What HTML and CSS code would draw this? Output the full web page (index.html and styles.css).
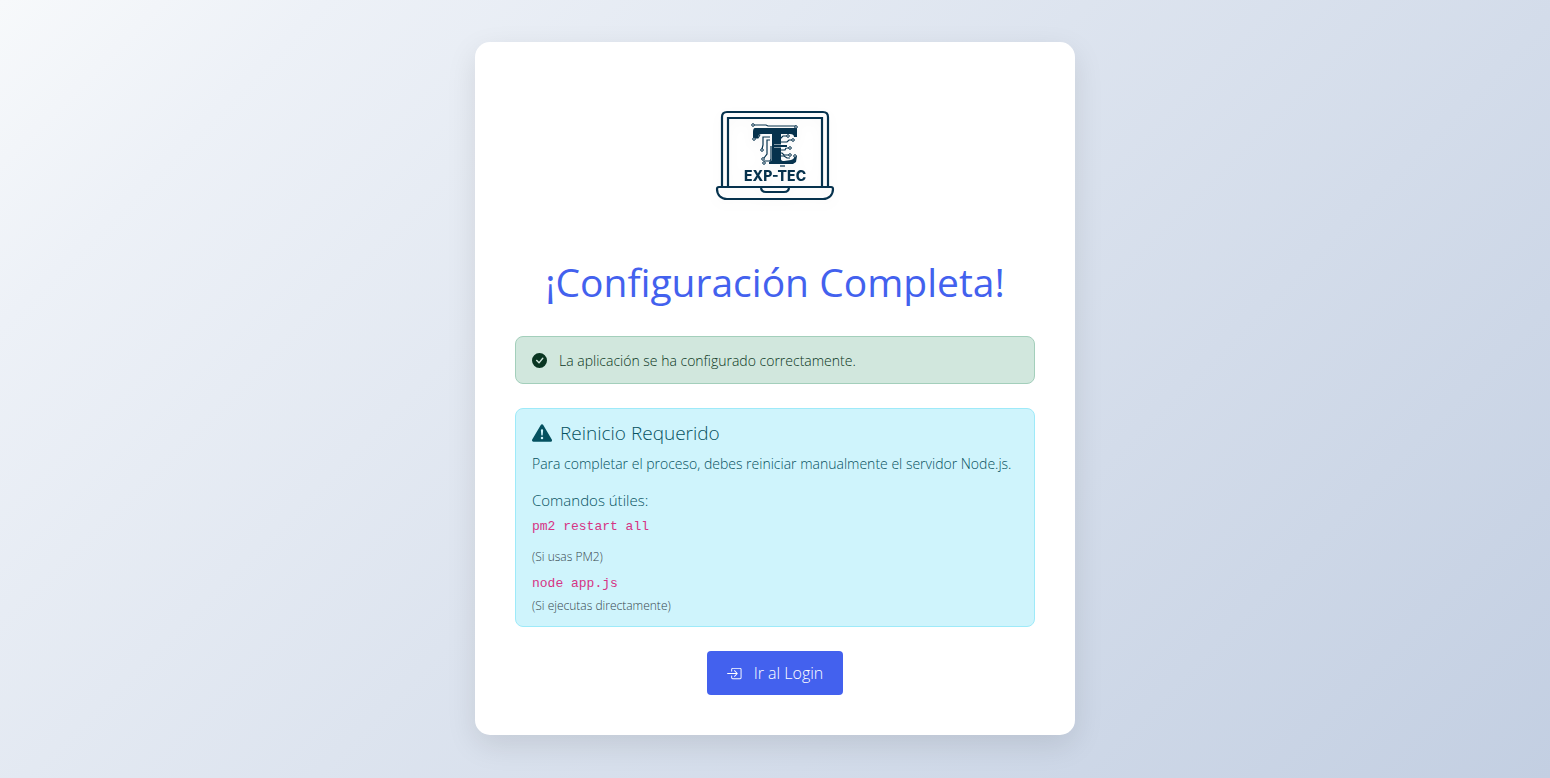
FILE: index.html
```html
<!DOCTYPE html>
<html lang="es">
<head>
<meta charset="utf-8">
<meta name="viewport" content="width=device-width, initial-scale=1">
<title>Configuración Completa</title>
<link rel="stylesheet" href="styles.css">
</head>
<body>
<main class="card">
  <svg class="logo" viewBox="0 0 120 92" role="img" aria-label="EXP-TEC">
    <g fill="none" stroke="#06324d" stroke-width="2.200">
      <path d="M7 76V7q0-5 5-5h96q5 0 5 5v69" />
      <path d="M13 76V8h94v68" />
      <path d="M4 77h112q2 0 2 2c0 6-4 10-10 10H12C6 89 2 85 2 79q0-2 2-2z" />
      <path d="M46 77q0 5 5 5h18q5 0 5-5" />
    </g>
    <path fill="#06324d" d="M40 18h42v9h-3q0-3-4-3H66v25q0 2 3 2l7-1q3-1 4-4h2l-1 6-3 2H54v-2q3-1 3-3V24H47q-4 0-4 4h-5v-6q0-4 2-4z" />
    <g fill="none" stroke="#06324d" stroke-width="1.200">
      <path d="M39 15h12l2 1h28M45 25l-2 3h-3M55 27h-7v8l-1 4M55 30h-3v14l-3 4M56 36v13l-1 2h-6" />
      <path d="M65 29l3-3h5M65 32h7l2-2h4M65 40h5l1-2h4M65 43h2l2 2h5M65 46h4l3 2h3" />
      <path d="M59 36h13" stroke="#fff" stroke-width="3" />
      <path d="M59 36h13" stroke-width="2" />
      <path d="M65 56h5" stroke-width="1.200" />
    </g>
    <g fill="#fff" stroke="#06324d">
      <circle cx="38" cy="15" r="1.300" /><circle cx="81" cy="17" r="1.300" />
      <circle cx="39" cy="29" r="1.300" /><circle cx="47" cy="40" r="1.300" />
      <circle cx="48" cy="49" r="1.300" /><circle cx="49" cy="53" r="1.300" />
      <circle cx="73" cy="26" r="1.300" /><circle cx="78" cy="30" r="1.300" />
      <circle cx="75" cy="38" r="1.300" /><circle cx="75" cy="45" r="1.300" />
      <circle cx="80" cy="46" r="1.300" />
    </g>
    <text class="logo-text" x="60" y="71" text-anchor="middle">EXP-TEC</text>
  </svg>
  <h1 class="title">¡Configuración Completa!</h1>
  <div class="alert alert-success" role="alert">
    <svg class="icon-check" viewBox="0 0 16 16" fill="currentColor" aria-hidden="true"><path d="M16 8A8 8 0 1 1 0 8a8 8 0 0 1 16 0m-3.97-3.03a.75.75 0 0 0-1.08.022L7.477 9.417 5.384 7.323a.75.75 0 0 0-1.06 1.06L6.97 11.03a.75.75 0 0 0 1.079-.02l3.992-4.99a.75.75 0 0 0-.01-1.05z"/></svg>
    <span>La aplicación se ha configurado correctamente.</span>
  </div>
  <section class="alert alert-info">
    <h2 class="alert-heading">
      <svg class="icon-warning" viewBox="0 0 16 16" fill="currentColor" aria-hidden="true"><path d="M8.982 1.566a1.13 1.13 0 0 0-1.96 0L.165 13.233c-.457.778.091 1.767.98 1.767h13.713c.889 0 1.438-.99.98-1.767zM8 5c.535 0 .954.462.9.995l-.35 3.507a.552.552 0 0 1-1.1 0L7.1 5.995A.905.905 0 0 1 8 5m.002 6a1 1 0 1 1 0 2 1 1 0 0 1 0-2"/></svg>
      <span>Reinicio Requerido</span>
    </h2>
    <p class="lead">Para completar el proceso, debes reiniciar manualmente el servidor Node.js.</p>
    <h3 class="commands-title">Comandos útiles:</h3>
    <code class="command">pm2 restart all</code>
    <p class="note note-first">(Si usas PM2)</p>
    <code class="command">node app.js</code>
    <p class="note">(Si ejecutas directamente)</p>
  </section>
  <a class="button" href="#login">
    <svg class="icon-login" viewBox="0 0 16 16" fill="currentColor" aria-hidden="true"><path fill-rule="evenodd" d="M4.5 3.5A1.5 1.5 0 0 1 6 2h8a1.5 1.5 0 0 1 1.500 1.500v9A1.500 1.500 0 0 1 14 14H6a1.500 1.500 0 0 1-1.500-1.500v-2a.5.5 0 0 1 1 0v2a.5.5 0 0 0 .5.5h8a.5.5 0 0 0 .5-.5v-9a.5.5 0 0 0-.5-.5H6a.5.5 0 0 0-.5.5v2a.5.5 0 0 1-1 0z"/><path fill-rule="evenodd" d="M11.354 8.354a.5.5 0 0 0 0-.708l-3-3a.5.5 0 1 0-.708.708L9.793 7.500H.5a.5.5 0 0 0 0 1h9.293l-2.147 2.146a.5.5 0 0 0 .708.708z"/></svg>
    <span>Ir al Login</span>
  </a>
</main>
</body>
</html>
```
FILE: styles.css
```css
* { box-sizing: border-box; }

body {
  margin: 0;
  min-height: 100vh;
  padding-bottom: 1px;
  display: flex;
  align-items: center;
  justify-content: center;
  font-family: "Open Sans", "Noto Sans", sans-serif;
  font-size: 14px;
  font-weight: 300;
  line-height: 21px;
  background: linear-gradient(135deg, #f7f9fb 0%, #edf1f7 14%, #c3cfe2 100%);
}

.card {
  display: flex;
  flex-direction: column;
  align-items: center;
  width: 100%;
  max-width: 600px;
  padding: 40px;
  border-radius: 15px;
  background: #fff;
  box-shadow: 0 10px 30px rgba(0, 0, 0, 0.1);
}

.logo {
  width: 120px;
  height: 92px;
  margin: 28px 0 56px;
  filter: drop-shadow(0 4px 6px rgba(0, 0, 0, 0.04));
}

.logo-text {
  font-family: Inter, sans-serif;
  font-size: 14px;
  font-weight: 800;
  fill: #06324d;
}

.title {
  margin: 0 0 30px;
  color: #4361ee;
  font-size: 39px;
  font-weight: 400;
  line-height: 48px;
  text-align: center;
}

.alert {
  width: 100%;
  margin-bottom: 24px;
  border: 1px solid;
  border-radius: 8px;
}

.alert-success {
  display: flex;
  align-items: center;
  gap: 12px;
  padding: 13px 16px 12px;
  border-color: #a3cfbb;
  background: #d1e7dd;
  color: #0a3622;
}

.alert-info {
  padding: 12px 16px 8px;
  border-color: #9eeaf9;
  background: #cff4fc;
  color: #055160;
}

.alert-heading {
  display: flex;
  align-items: center;
  gap: 8px;
  margin: 0 0 8px;
  font-size: 19px;
  font-weight: 300;
  line-height: 24px;
}

.lead { margin: 0 0 16px; }

.commands-title {
  margin: 0 0 7px;
  font-size: 15px;
  font-weight: 300;
  line-height: 20px;
}

.command {
  display: block;
  color: #d63384;
  font-family: "Liberation Mono", monospace;
  font-size: 13px;
  font-weight: 400;
  line-height: 20px;
}

.note {
  margin: 0;
  color: #36464c;
  font-size: 12px;
  line-height: 24px;
}

.note-first { margin: 8px 0 5px; }

.button {
  display: inline-flex;
  align-items: center;
  gap: 12px;
  padding: 10px 20px;
  border-radius: 4px;
  background: #4361ee;
  color: #fff;
  font-size: 16px;
  line-height: 24px;
  text-decoration: none;
}

.icon-check { width: 15px; height: 15px; }
.icon-warning { width: 20px; height: 20px; }
.icon-login { width: 15px; height: 15px; }
```
